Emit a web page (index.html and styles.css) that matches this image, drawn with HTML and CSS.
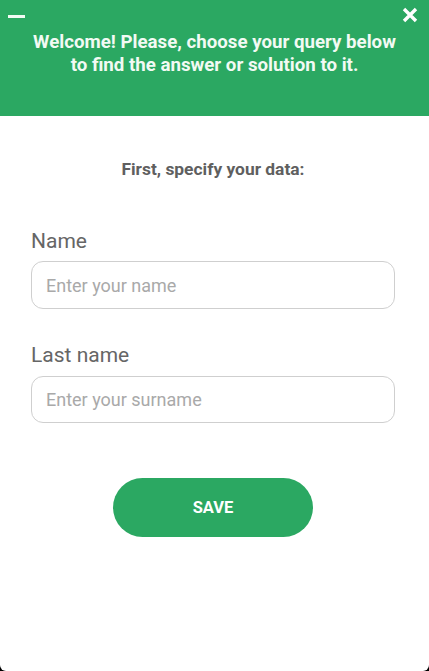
FILE: index.html
```html
<!DOCTYPE html>
<html lang="en">
<head>
<meta charset="utf-8">
<link rel="stylesheet" href="styles.css">
</head>
<body>
<div class="widget">
  <header class="header">
    <div class="topbar">
      <span class="minimize"></span>
      <svg class="close" width="16" height="16" viewBox="0 0 16 16"><path d="M2 2 L14 14 M14 2 L2 14" stroke="#fff" stroke-width="3.4" stroke-linecap="butt"/></svg>
    </div>
    <p class="welcome">Welcome! Please, choose your query below<br>to find the answer or solution to it.</p>
  </header>
  <main class="content">
    <p class="intro">First, specify your data:</p>
    <label class="label">Name</label>
    <div class="input"><span class="placeholder">Enter your name</span></div>
    <label class="label label-second">Last name</label>
    <div class="input input-second"><span class="placeholder">Enter your surname</span></div>
    <div class="actions"><button class="save">SAVE</button></div>
  </main>
</div>
</body>
</html>
```
FILE: styles.css
```css
html, body {
  margin: 0;
  padding: 0;
  background: #000;
}
body {
  font-family: Roboto, "Liberation Sans", sans-serif;
}
.widget {
  width: 429px;
  height: 671px;
  background: #fff;
  border-radius: 0 0 6px 6px;
  overflow: hidden;
}
.header {
  background: #2ba862;
  height: 116px;
  box-sizing: border-box;
}
.topbar {
  display: flex;
  justify-content: space-between;
  align-items: flex-start;
  height: 31px;
  padding: 0 11px 0 8px;
}
.minimize {
  display: block;
  width: 17px;
  height: 3px;
  margin-top: 15px;
  background: #f2fbf4;
}
.close {
  display: block;
  margin-top: 7px;
}
.welcome {
  margin: 0;
  color: #f2faf4;
  font-weight: 700;
  font-size: 18.7px;
  line-height: 23px;
  text-align: center;
}
.content {
  padding: 0 34px 0 31px;
}
.intro {
  margin: 43px 0 0;
  text-align: center;
  font-weight: 700;
  font-size: 17.4px;
  line-height: 20px;
  color: #5f5f5f;
}
.label {
  display: block;
  margin-top: 50px;
  font-size: 21px;
  line-height: 24px;
  color: #666;
}
.label-second {
  margin-top: 34px;
}
.input {
  margin-top: 8px;
  height: 48px;
  box-sizing: border-box;
  border: 1px solid #cfcfcf;
  border-radius: 12px;
  display: flex;
  align-items: center;
  padding-left: 14px;
}
.input-second {
  margin-top: 9px;
  height: 47px;
}
.placeholder {
  font-size: 18px;
  color: #a9a9a9;
}
.actions {
  display: flex;
  justify-content: center;
  margin-top: 55px;
}
.save {
  width: 200px;
  height: 59px;
  border: none;
  border-radius: 30px;
  background: #2ba862;
  color: #fff;
  font-family: Roboto, "Liberation Sans", sans-serif;
  font-weight: 700;
  font-size: 16.5px;
  padding: 0;
}
```
